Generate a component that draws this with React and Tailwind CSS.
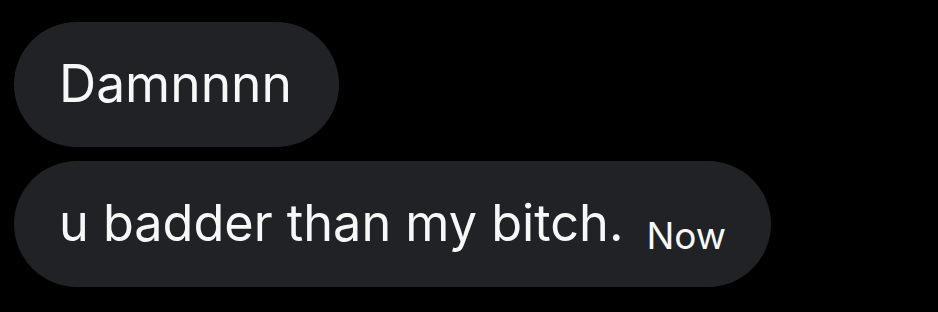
export default function App() {
    return (
        <div className="w-[938px] h-[312px] bg-black flex flex-col items-start gap-[14px] pt-[22px] pl-[14px] font-['Inter',sans-serif] text-[#f7f7f7]">
            <div className="h-[125px] rounded-full bg-[#202226] pl-[45px] pr-[47px] flex items-center">
                <span className="text-[51.5px] leading-none -mt-[2px]">Damnnnn</span>
            </div>
            <div className="h-[126px] rounded-full bg-[#202226] pl-[45px] pr-[45px] flex items-center">
                <span className="text-[50.4px] leading-none -mt-[2px]">u badder than my bitch.</span>
                <span className="ml-[23px] mt-[22px] text-[37px] leading-none">Now</span>
            </div>
        </div>
    )
}
